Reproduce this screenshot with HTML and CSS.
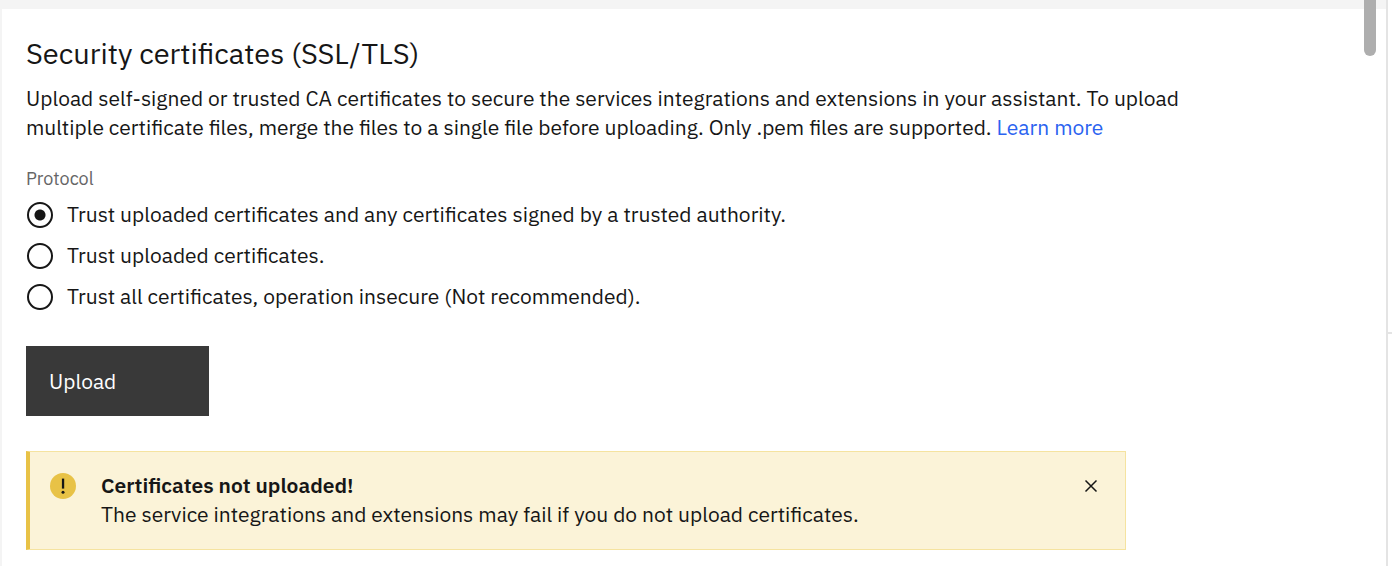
FILE: index.html
```html
<!DOCTYPE html>
<html lang="en">
<head>
<meta charset="utf-8">
<meta name="viewport" content="width=device-width, initial-scale=1">
<title>Security certificates</title>
<link rel="stylesheet" href="styles.css">
</head>
<body>
<div class="page">
  <main class="panel">
    <h1 class="title">Security certificates (SSL/TLS)</h1>
    <p class="intro">Upload self-signed or trusted CA certificates to secure the services integrations and extensions in your assistant. To upload <br>multiple certificate files, merge the files to a single file before uploading. Only .pem files are supported. <a class="link" href="#">Learn more</a></p>
    <fieldset class="protocol">
      <legend class="legend">Protocol</legend>
      <label class="option"><input class="radio" type="radio" name="protocol" checked><span>Trust uploaded certificates and any certificates signed by a trusted authority.</span></label>
      <label class="option"><input class="radio" type="radio" name="protocol"><span>Trust uploaded certificates.</span></label>
      <label class="option"><input class="radio" type="radio" name="protocol"><span>Trust all certificates, operation insecure (Not recommended).</span></label>
    </fieldset>
    <button class="upload" type="button">Upload</button>
    <section class="notice">
      <svg class="notice-icon" viewBox="0 0 26 26" aria-hidden="true"><circle cx="13" cy="13" r="13" fill="#e8c246"/><path d="M11.9 5.6h2.3v10h-2.3z" fill="#161616"/><circle cx="13" cy="19.2" r="1.5" fill="#161616"/></svg>
      <div class="notice-text">
        <strong class="notice-title">Certificates not uploaded!</strong>
        <p class="notice-body">The service integrations and extensions may fail if you do not upload certificates.</p>
      </div>
      <button class="close" type="button" aria-label="Close"><svg viewBox="0 0 14 14" width="14" height="14" aria-hidden="true"><path d="M1.5 1.5l11 11M12.5 1.5l-11 11" stroke="#161616" stroke-width="1.5"/></svg></button>
    </section>
  </main>
  <div class="scroll-track"><div class="scroll-thumb"></div></div>
  <div class="gutter"></div>
</div>
</body>
</html>
```
FILE: styles.css
```css
* { box-sizing: border-box; }
body { margin: 0; background: #fff; color: #161616; font-family: "IBM Plex Sans", "Noto Sans", sans-serif; font-size: 21px; line-height: 29px; }
.page { display: flex; min-height: 100vh; border-left: 2px solid #f4f4f4; }
.panel { flex: 1; min-width: 0; border-top: 9px solid #f4f4f4; padding: 24px 0 16px 24px; }
.title { margin: 0; font-size: 29px; line-height: 40px; font-weight: 400; }
.intro { max-width: 1160px; margin: 11px 0 0; }
.link { color: #2b63f0; text-decoration: none; }
.protocol { margin: 22px 0 0; padding: 0; border: 0; }
.legend { padding: 0; font-size: 18px; line-height: 30px; color: #666; }
.option { display: flex; align-items: center; gap: 14px; min-height: 41px; padding-left: 1px; }
.radio { appearance: none; flex: none; width: 26px; height: 26px; margin: 0; border: 2px solid #161616; border-radius: 50%; background: #fff; }
.radio:checked { background: radial-gradient(circle, #161616 0 5px, #fff 6px); }
.upload { display: block; width: 183px; height: 70px; margin: 29px 0 0; padding: 0 23px; border: 0; background: #393939; color: #fff; font: inherit; text-align: left; }
.notice { display: flex; align-items: flex-start; max-width: 1100px; margin-top: 35px; padding: 19px 27px 20px 20px; border: 1px solid #f5e3a0; border-left: 4px solid #e8c246; background: #fbf3d8; }
.notice-icon { flex: none; width: 26px; height: 26px; margin: 2px 25px 0 0; }
.notice-text { flex: 1; }
.notice-title { display: block; font-weight: 600; }
.notice-body { margin: 0; }
.close { margin: 8px 0 0; padding: 0; border: 0; background: none; line-height: 0; }
.scroll-track { width: 24px; background: linear-gradient(#f4f4f4 9px, #fff 9px); }
.scroll-thumb { width: 12px; height: 56px; margin-left: 2px; border-radius: 0 0 6px 6px; background: #aeaeae; }
.gutter { width: 6px; border-left: 2px solid #e4e4e4; }
.gutter::before { content: ""; display: block; height: 332px; border-bottom: 2px solid #e4e4e4; }
```
